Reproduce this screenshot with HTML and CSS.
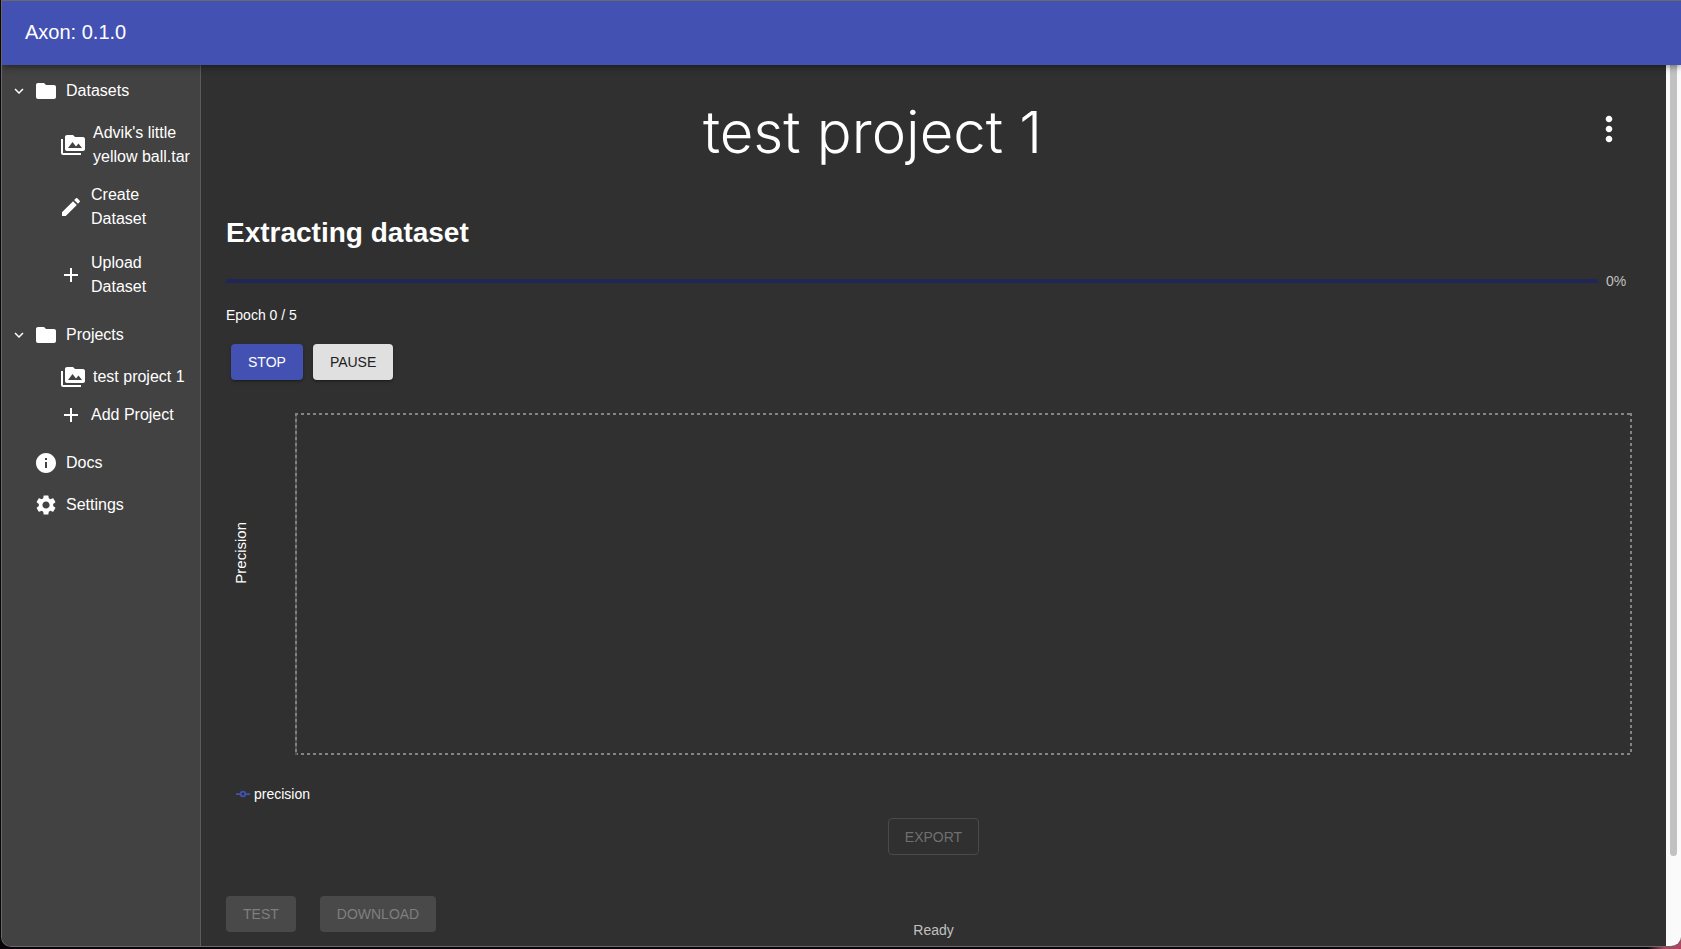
FILE: index.html
```html
<!DOCTYPE html>
<html lang="en">
<head>
<meta charset="utf-8">
<title>Axon</title>
<link rel="stylesheet" href="styles.css">
</head>
<body>
<svg class="sprite" aria-hidden="true">
  <symbol id="chevron" viewBox="0 0 24 24"><path d="M16.59 8.59 12 13.17 7.41 8.59 6 10l6 6 6-6z"/></symbol>
  <symbol id="folder" viewBox="0 0 24 24"><path d="M10 4H4c-1.100 0-1.990.9-1.990 2L2 18c0 1.100.9 2 2 2h16c1.100 0 2-.9 2-2V8c0-1.100-.9-2-2-2h-8l-2-2z"/></symbol>
  <symbol id="media" viewBox="0 0 24 24"><path d="M2 6H0v5h.01L0 20c0 1.100.9 2 2 2h18v-2H2V6zm20-2h-8l-2-2H6c-1.100 0-1.990.9-1.990 2L4 16c0 1.100.9 2 2 2h16c1.100 0 2-.9 2-2V6c0-1.100-.9-2-2-2zM7 15l4.500-6 3.500 4.510 2.500-3.010L21 15H7z"/></symbol>
  <symbol id="pencil" viewBox="0 0 24 24"><path d="M3 17.250V21h3.750L17.810 9.940l-3.750-3.750L3 17.250zM20.710 7.040c.39-.39.39-1.020 0-1.410l-2.340-2.340a.9959.9959 0 0 0-1.410 0l-1.830 1.830 3.750 3.750 1.830-1.830z"/></symbol>
  <symbol id="plus" viewBox="0 0 24 24"><path d="M19 13h-6v6h-2v-6H5v-2h6V5h2v6h6v2z"/></symbol>
  <symbol id="info" viewBox="0 0 24 24"><path d="M12 2C6.480 2 2 6.480 2 12s4.480 10 10 10 10-4.480 10-10S17.520 2 12 2zm1 15h-2v-6h2v6zm0-8h-2V7h2v2z"/></symbol>
  <symbol id="gear" viewBox="0 0 24 24"><path d="M19.140 12.940c.04-.3.06-.61.06-.94 0-.32-.02-.64-.07-.94l2.030-1.580c.18-.14.23-.41.12-.61l-1.920-3.320c-.12-.22-.37-.29-.59-.22l-2.390.96c-.5-.38-1.030-.7-1.620-.94l-.36-2.540c-.04-.24-.24-.41-.48-.41h-3.840c-.24 0-.43.17-.47.41l-.36 2.540c-.59.24-1.130.57-1.620.94l-2.390-.96c-.22-.08-.47 0-.59.22L2.740 8.870c-.12.21-.08.47.12.61l2.030 1.580c-.05.3-.09.63-.09.94s.02.64.07.94l-2.030 1.580c-.18.14-.23.41-.12.61l1.920 3.320c.12.22.37.29.59.22l2.390-.96c.5.38 1.030.7 1.620.94l.36 2.540c.05.24.24.41.48.41h3.840c.24 0 .44-.17.47-.41l.36-2.540c.59-.24 1.130-.56 1.620-.94l2.390.96c.22.08.47 0 .59-.22l1.920-3.320c.12-.22.07-.47-.12-.61l-2.010-1.580zM12 15.600c-1.980 0-3.600-1.620-3.600-3.600s1.620-3.600 3.600-3.600 3.600 1.620 3.600 3.600-1.620 3.600-3.600 3.600z"/></symbol>
  <symbol id="more" viewBox="0 0 24 24"><path d="M12 8c1.100 0 2-.9 2-2s-.9-2-2-2-2 .9-2 2 .9 2 2 2zm0 2c-1.100 0-2 .9-2 2s.9 2 2 2 2-.9 2-2-.9-2-2-2zm0 6c-1.100 0-2 .9-2 2s.9 2 2 2 2-.9 2-2-.9-2-2-2z"/></symbol>
</svg>
<div class="window">
  <header class="app-bar">Axon: 0.1.0</header>
  <div class="body">
    <nav class="sidebar">
      <button class="row"><svg class="chev"><use href="#chevron"/></svg><svg class="icon"><use href="#folder"/></svg><span>Datasets</span></button>
      <button class="row child"><svg class="icon"><use href="#media"/></svg><span>Advik's little yellow ball.tar</span></button>
      <button class="row child action wrap"><svg class="icon"><use href="#pencil"/></svg><span>Create Dataset</span></button>
      <button class="row child action wrap"><svg class="icon"><use href="#plus"/></svg><span>Upload Dataset</span></button>
      <button class="row"><svg class="chev"><use href="#chevron"/></svg><svg class="icon"><use href="#folder"/></svg><span>Projects</span></button>
      <button class="row child"><svg class="icon"><use href="#media"/></svg><span>test project 1</span></button>
      <button class="row child action"><svg class="icon"><use href="#plus"/></svg><span>Add Project</span></button>
      <button class="row leaf"><svg class="icon"><use href="#info"/></svg><span>Docs</span></button>
      <button class="row leaf"><svg class="icon"><use href="#gear"/></svg><span>Settings</span></button>
    </nav>
    <main class="content">
      <div class="title-row">
        <h1>test project 1</h1>
        <div class="menu-col"><button class="menu" aria-label="Project menu"><svg><use href="#more"/></svg></button></div>
      </div>
      <h2>Extracting dataset</h2>
      <div class="progress"><div class="track" role="progressbar" aria-valuenow="0" aria-label="Progress"></div><span class="percent">0%</span></div>
      <p class="epoch">Epoch 0 / 5</p>
      <div class="controls">
        <button class="btn primary">STOP</button>
        <button class="btn light">PAUSE</button>
      </div>
      <div class="chart">
        <span class="axis-label">Precision</span>
        <svg class="plot" aria-hidden="true">
          <line x1="0" y1="1" x2="100%" y2="1"/>
          <line x1="0" y1="341" x2="100%" y2="341"/>
          <line class="left" x1="1" y1="0" x2="1" y2="342"/>
          <line class="left dash" x1="1" y1="0" x2="1" y2="342"/>
          <svg x="100%" overflow="visible"><line x1="-1" y1="0" x2="-1" y2="342"/></svg>
        </svg>
      </div>
      <div class="legend">
        <svg width="14" height="14" viewBox="0 0 32 32"><path d="M0 16h10.667a5.333 5.333 0 1 1 10.667 0H32M21.333 16a5.333 5.333 0 1 1-10.667 0"/></svg>
        <span>precision</span>
      </div>
      <div class="export"><button class="btn outlined" disabled>EXPORT</button></div>
      <div class="footer">
        <div class="footer-actions">
          <button class="btn off" disabled>TEST</button>
          <button class="btn off" disabled>DOWNLOAD</button>
        </div>
        <p class="status">Ready</p>
        <div class="footer-end"></div>
      </div>
    </main>
    <div class="scrollbar"><div class="thumb"></div></div>
  </div>
</div>
</body>
</html>
```
FILE: styles.css
```css
* { box-sizing: border-box; }
body {
  margin: 0;
  min-height: 100vh;
  display: flex;
  padding: 0 0 2px 1px;
  background: linear-gradient(90deg, #0a050c 98%, #b04560 99%);
  color: #fff;
  font: 14px/20px "Liberation Sans", Arial, sans-serif;
}
.sprite { display: none; }
button { font: inherit; color: inherit; background: none; border: 0; padding: 0; margin: 0; }
svg { fill: currentColor; flex: none; }
h1, h2, p { margin: 0; }

.window {
  flex: 1;
  min-width: 0;
  display: flex;
  flex-direction: column;
  overflow: hidden;
  border: 1px solid #6a6a6a;
  border-right: 0;
  border-radius: 0 0 10px 10px;
  background: #303030;
}
.app-bar {
  z-index: 1;
  padding: 15px 23px 17px;
  background: #4351b3;
  font-size: 20px;
  line-height: 32px;
  box-shadow: 0 2px 4px -1px rgba(0,0,0,.2), 0 4px 5px rgba(0,0,0,.14), 0 1px 10px rgba(0,0,0,.12);
}
.body { flex: 1; display: flex; }

.sidebar {
  flex: none;
  width: 199px;
  padding-top: 5px;
  background: #424242;
  border-right: 1px solid #5c5c5c;
}
.row {
  display: flex;
  align-items: center;
  width: 100%;
  padding: 9px 0 9px 8px;
  text-align: left;
  font-size: 16px;
  line-height: 24px;
}
.chev { width: 18px; height: 18px; margin-right: 6px; }
.icon { width: 24px; height: 24px; margin-right: 8px; }
.row.leaf { padding-left: 32px; }
.row.child { padding-left: 59px; }
.row.action { padding: 5px 0 5px 57px; margin-bottom: 10px; }
.row.wrap { padding-right: 48px; }

.content { flex: 1; min-width: 0; padding: 32px 25px 0; }
.title-row { display: flex; align-items: flex-start; }
h1 {
  flex: 1;
  text-align: center;
  font: 300 58px/70px Inter, "Liberation Sans", sans-serif;
}
.menu-col { width: 122px; display: flex; justify-content: flex-end; }
.menu { padding: 12px; height: 64px; }
.menu svg { width: 40px; height: 40px; }
h2 { margin-top: 49px; font-size: 28px; line-height: 34px; }
.progress { display: flex; align-items: center; margin-top: 21px; }
.track { flex: 1; height: 4px; margin-right: 8px; background: #202757; }
.percent { width: 35px; color: #c1c1c1; }
.epoch { margin-top: 14px; }
.controls { display: flex; gap: 10px; padding: 19px 5px 0; }
.btn {
  height: 36px;
  padding: 0 17px;
  border-radius: 4px;
  font-size: 14px;
  line-height: 24px;
}
.primary, .light { box-shadow: 0 3px 1px -2px rgba(0,0,0,.2), 0 2px 2px rgba(0,0,0,.14), 0 1px 5px rgba(0,0,0,.12); }
.primary { background: #4351b3; }
.light { background: #e0e0e0; color: #212121; }

.chart { display: flex; align-items: center; margin-top: 33px; padding-right: 9px; }
.axis-label {
  width: 69px;
  padding-right: 5px;
  margin-bottom: 62px;
  writing-mode: vertical-rl;
  transform: rotate(180deg);
  font-size: 15px;
  line-height: 20px;
}
.plot { flex: 1; min-width: 0; height: 342px; stroke: #848484; stroke-width: 2; stroke-dasharray: 3 3; }
.plot .left { stroke: #525252; stroke-dasharray: none; }
.plot .left.dash { stroke: #808080; stroke-dasharray: 3 3; }
.legend { display: flex; align-items: center; gap: 4px; padding: 29px 0 0 10px; }
.legend svg { fill: none; stroke: #4351b3; stroke-width: 4; }
.export { display: flex; justify-content: center; margin-top: 14px; }
.btn.outlined { height: 37px; padding: 0 16px; border: 1px solid #4a4a4a; color: #6f6f6f; }
.footer { display: flex; align-items: flex-start; padding-top: 41px; }
.footer-actions, .footer-end { flex: 1; }
.footer-actions { display: flex; gap: 24px; }
.off { background: #494949; color: #7f7f7f; }
.status { padding-top: 24px; color: #c1c1c1; }

.scrollbar { flex: none; width: 15px; padding: 0 4px 90px; background: #fafafa; display: flex; }
.thumb { width: 8px; border-radius: 0 0 4px 4px; background: #c1c1c1; }
```
